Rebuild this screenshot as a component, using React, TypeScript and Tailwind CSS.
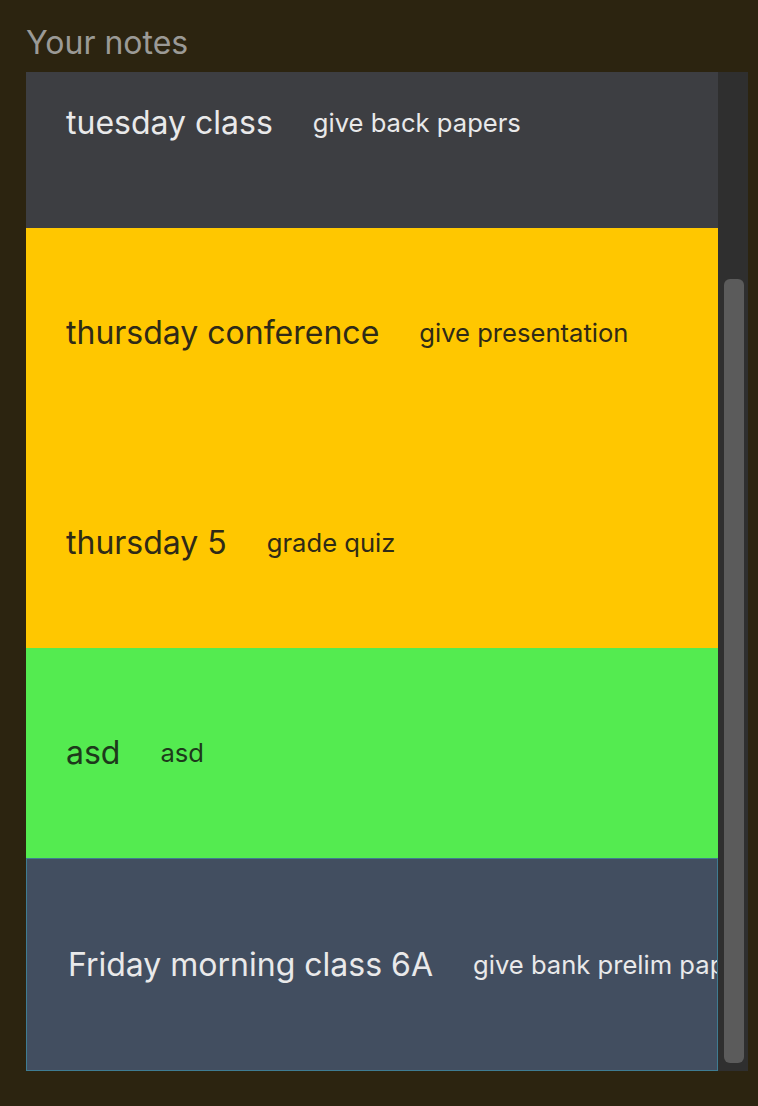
import React from "react";

type Note = {
  id: number;
  title: string;
  body: string;
  bg: string;
  text: string;
  extra?: string;
};

const notes: Note[] = [
  { id: 1, title: "tuesday class", body: "give back papers", bg: "bg-[#3d3e42]", text: "text-[#e9e9ea]" },
  { id: 2, title: "thursday conference", body: "give presentation", bg: "bg-[#ffc700]", text: "text-[#2f2a17]" },
  { id: 3, title: "thursday 5", body: "grade quiz", bg: "bg-[#ffc700]", text: "text-[#2f2a17]" },
  { id: 4, title: "asd", body: "asd", bg: "bg-[#54eb50]", text: "text-[#1d3a1b]" },
  {
    id: 5,
    title: "Friday morning class 6A",
    body: "give bank prelim papers",
    bg: "bg-[#424e60]",
    text: "text-[#e9e9ea]",
    extra: "h-[213px] border border-[#3f7c92] pl-[41px]",
  },
];

function NoteRow({ note }: { note: Note }) {
  return (
    <div
      className={`h-[210px] shrink-0 flex items-center gap-10 pl-10 whitespace-nowrap overflow-hidden ${note.bg} ${note.text} ${note.extra ?? ""}`}
    >
      <span className="text-[32px] leading-none">{note.title}</span>
      <span className="text-[25.6px] leading-none">{note.body}</span>
    </div>
  );
}

export default function App() {
  return (
    <div
      className="w-[758px] h-[1106px] bg-[#2c2410] pl-[26px] pr-[10px] pt-[24px]"
      style={{ fontFamily: "Inter, 'Noto Sans', sans-serif" }}
    >
      <h2 className="text-[32px] leading-[38px] text-[#9b9a96] h-[48px]">Your notes</h2>

      {/* scroll viewport */}
      <div className="flex h-[999px]">
        <div className="flex-1 min-w-0 overflow-hidden flex flex-col">
          <div className="flex flex-col -mt-[54px]">
            {notes.map((n) => (
              <NoteRow key={n.id} note={n} />
            ))}
          </div>
        </div>
        <div className="w-[30px] shrink-0 bg-[#2f2f2f] pl-[6px] pr-[4px] pt-[207px] pb-[8px] flex">
          <div className="flex-1 rounded-[6px] bg-[#5b5b5b]" />
        </div>
      </div>
    </div>
  );
}
